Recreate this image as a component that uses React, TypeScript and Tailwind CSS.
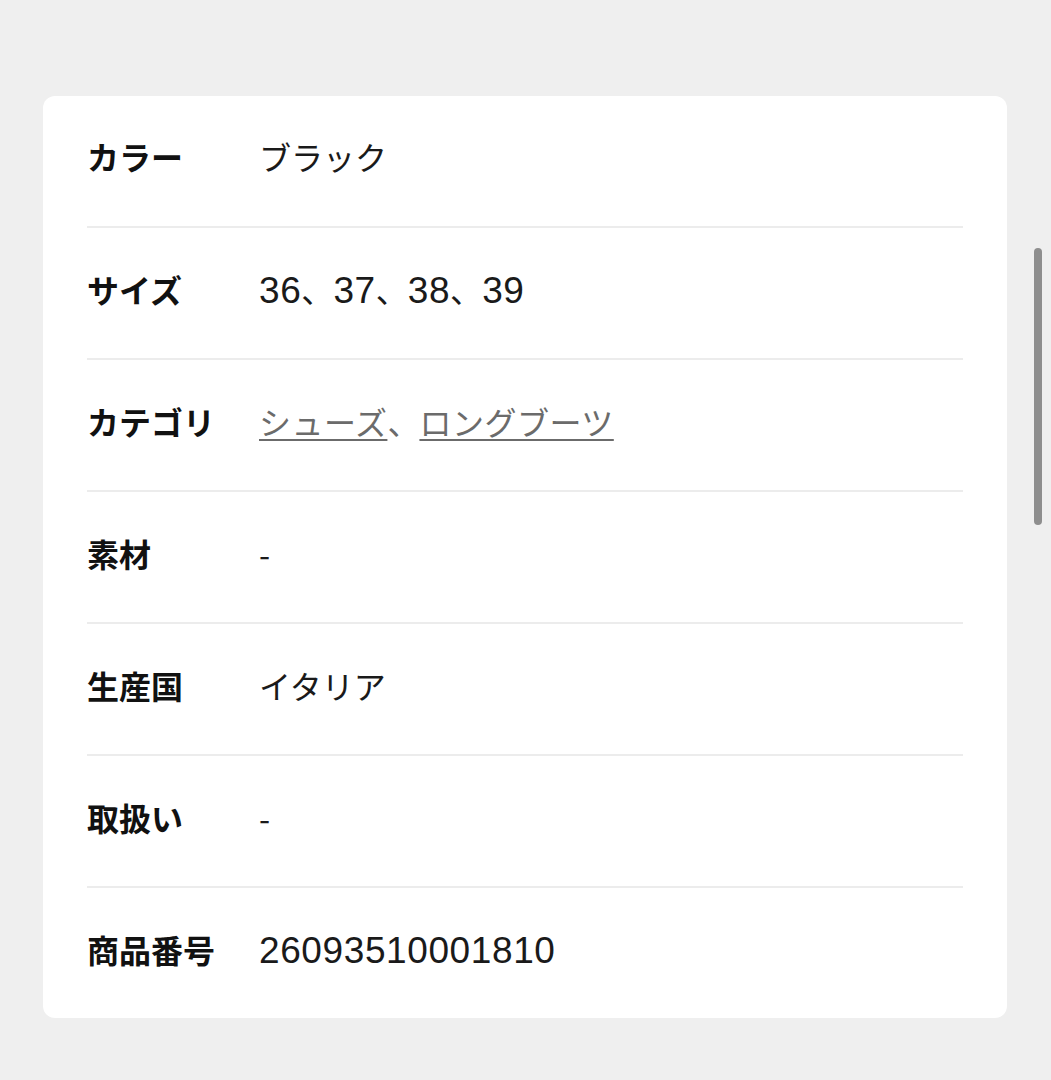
const num = 'font-["Liberation_Sans","Noto_Sans_CJK_JP",sans-serif] text-[37px] leading-none tracking-[0.6px]';

const rows: { label: string; value: React.ReactNode }[] = [
  { label: 'カラー', value: 'ブラック' },
  {
    label: 'サイズ',
    value: (
      <>
        <span className={num}>36</span>、<span className={num}>37</span>、<span className={num}>38</span>、
        <span className={num}>39</span>
      </>
    ),
  },
  {
    label: 'カテゴリ',
    value: (
      <>
        <a className="text-[#6b6b6b] underline decoration-2 underline-offset-[4px] tracking-[0.5px]">シューズ</a>
        <span className="text-[#6b6b6b]">、</span>
        <a className="text-[#6b6b6b] underline decoration-2 underline-offset-[4px] tracking-[0.5px]">ロングブーツ</a>
      </>
    ),
  },
  { label: '素材', value: '-' },
  { label: '生産国', value: 'イタリア' },
  { label: '取扱い', value: '-' },
  { label: '商品番号', value: <span className={num}>26093510001810</span> },
];

export default function App() {
  return (
    <div
      className="relative min-h-[1080px] w-full bg-[#efefef] pt-[96px] pl-[43px]"
      style={{ fontFamily: '"Noto Sans CJK JP", "Noto Sans", sans-serif' }}
    >
      <div className="w-[964px] rounded-[12px] bg-white px-[44px]">
        {rows.map((row, i) => (
          <div
            key={row.label}
            className={
              'flex items-center text-[32px] leading-[48px] ' +
              (i === 0 ? 'pt-[36px] pb-[46px] ' : 'pt-[37px] pb-[45px] ') +
              (i < rows.length - 1 ? 'border-b-2 border-[#ececec]' : '')
            }
          >
            <div className="w-[172px] shrink-0 font-bold text-[#111]">{row.label}</div>
            <div className="text-[#1a1a1a]">{row.value}</div>
          </div>
        ))}
      </div>
      {/* overlay scrollbar */}
      <div className="absolute left-[1034px] top-[248px] h-[277px] w-[8px] rounded-full bg-[#8e8e8e]" />
    </div>
  );
}
